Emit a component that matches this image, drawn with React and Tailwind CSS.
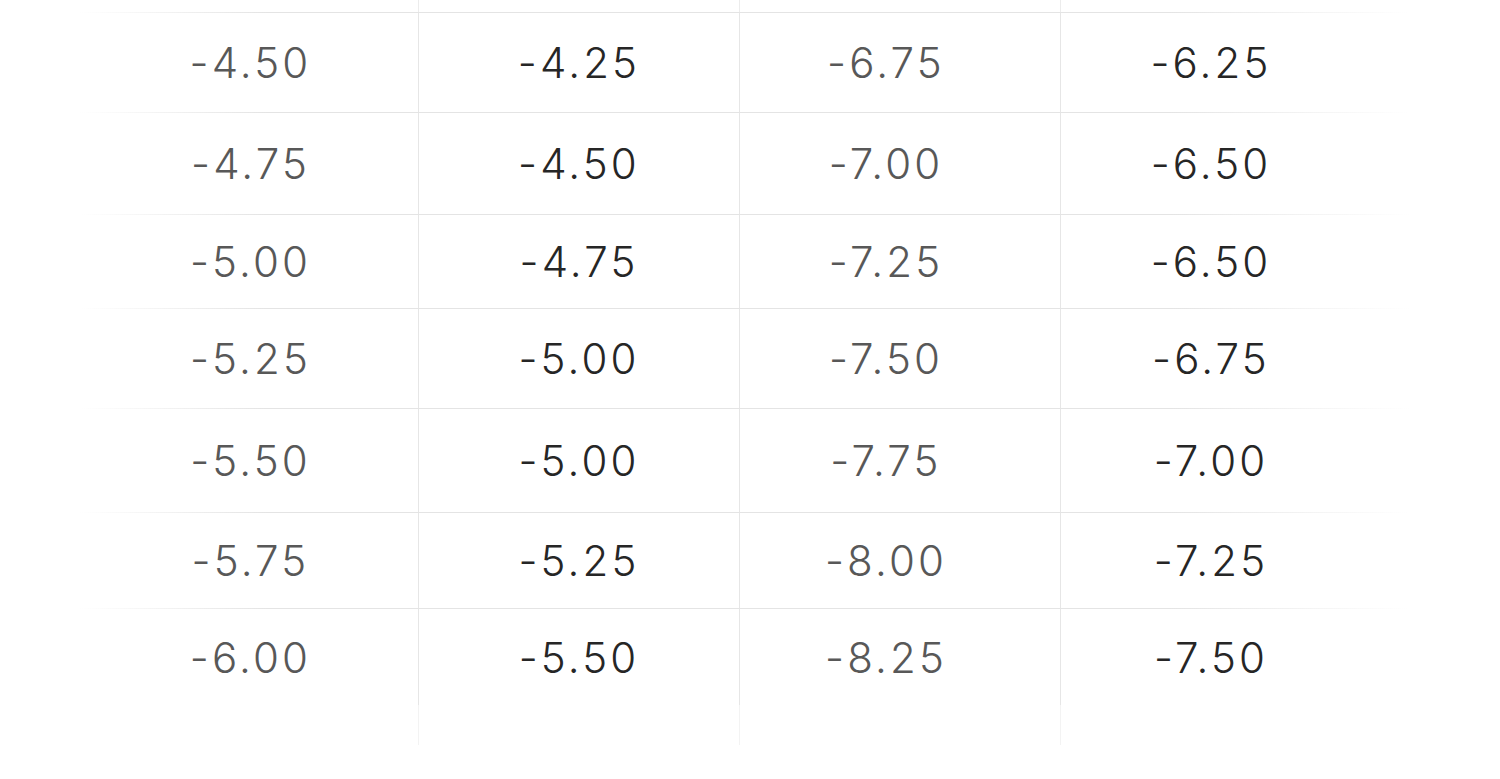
import React from 'react';

const rows = [
  { h: 'h-[99px]', v: ['-4.50', '-4.25', '-6.75', '-6.25'] },
  { h: 'h-[101px]', v: ['-4.75', '-4.50', '-7.00', '-6.50'] },
  { h: 'h-[93px]', v: ['-5.00', '-4.75', '-7.25', '-6.50'] },
  { h: 'h-[99px]', v: ['-5.25', '-5.00', '-7.50', '-6.75'] },
  { h: 'h-[103px]', v: ['-5.50', '-5.00', '-7.75', '-7.00'] },
  { h: 'h-[95px]', v: ['-5.75', '-5.25', '-8.00', '-7.25'] },
  { h: 'h-[96px]', v: ['-6.00', '-5.50', '-8.25', '-7.50'] },
];

// per-column cell style: divider + text tone + small optical offset
const cols = [
  'pr-[14px] text-[#585858]',
  'border-l border-[#e6e6e6] text-[#262626]',
  'border-l border-[#e6e6e6] pr-[28px] text-[#585858]',
  'border-l border-[#e6e6e6] pr-[20px] text-[#262626]',
];

const Line = () => (
  <div className="ml-[80px] mr-[90px] h-px bg-[linear-gradient(to_right,transparent,#e4e4e4_14%,#e4e4e4_82%,transparent)]" />
);

const Strip = ({ h, tone }) => (
  <div className={`grid grid-cols-[321px_321px_321px_321px] pl-[97px] ${h}`}>
    <div />
    <div className={`border-l ${tone}`} />
    <div className={`border-l ${tone}`} />
    <div className={`border-l ${tone}`} />
  </div>
);

export default function App() {
  return (
    <div
      className="w-[1500px] h-[779px] bg-white overflow-hidden"
      style={{ fontFamily: 'Inter, "Noto Sans", sans-serif' }}
    >
      <Strip h="h-[12px]" tone="border-[#ececec]" />
      {rows.map((r, i) => (
        <div key={i}>
          <Line />
          <div className={`grid grid-cols-[321px_321px_321px_321px] pl-[97px] ${r.h}`}>
            {r.v.map((t, j) => (
              <div
                key={j}
                className={`flex items-center justify-center text-[42px] font-light tracking-[0.075em] ${cols[j]}`}
              >
                {t}
              </div>
            ))}
          </div>
        </div>
      ))}
      <Strip h="h-[40px]" tone="border-[#f3f3f3]" />
    </div>
  );
}
